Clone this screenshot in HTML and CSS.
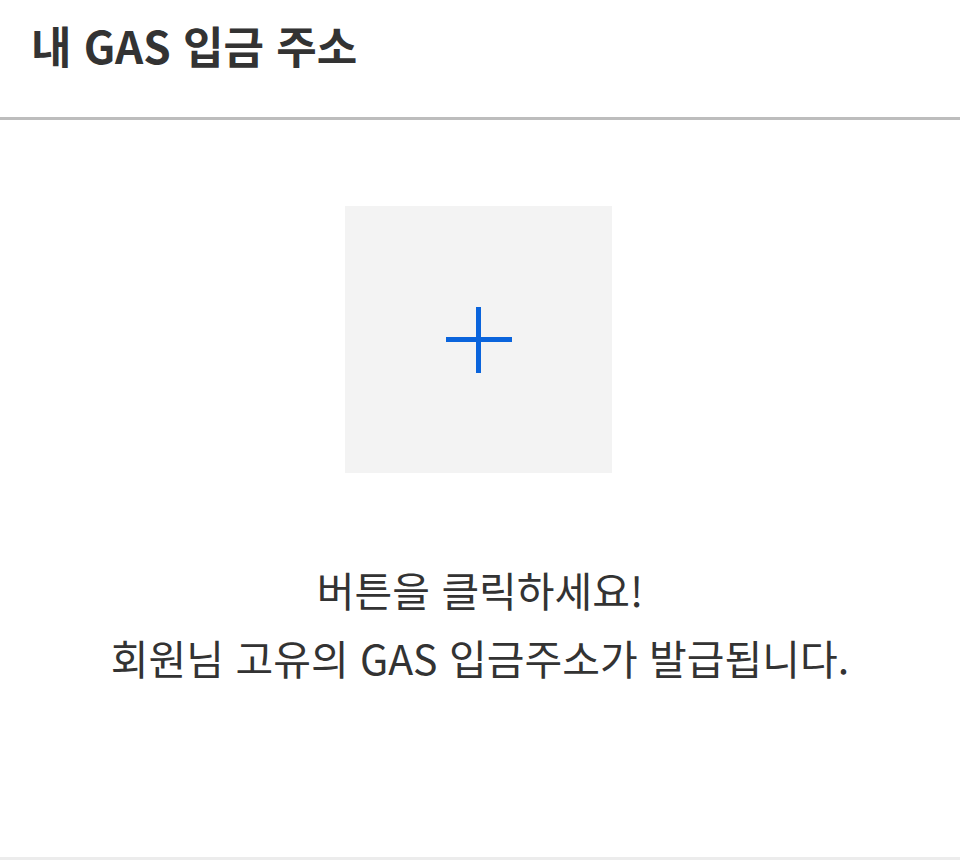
FILE: index.html
```html
<!DOCTYPE html>
<html lang="ko">
<head>
    <meta charset="UTF-8">
    <meta name="viewport" content="width=device-width, initial-scale=1.0">
    <title>내 GAS 입금 주소</title>
    <link rel="stylesheet" href="styles.css">
</head>
<body>

<div class="page">
    <header class="page-header">
        <h1>내 GAS 입금 주소</h1>
    </header>

    <main class="address-panel">
        <button class="add-button" type="button" aria-label="주소 발급">
            <svg width="66" height="66" viewBox="0 0 66 66">
                <path d="M0 32.5H66M32.5 0V66" stroke="#0a64dc" stroke-width="5" fill="none"/>
            </svg>
        </button>
        <p class="guide">
            버튼을 클릭하세요!<br>
            회원님 고유의 GAS 입금주소가 발급됩니다.
        </p>
    </main>
</div>

</body>
</html>
```

FILE: styles.css
```css
body {
    margin: 0;
    background: #fff;
    font-family: "Noto Sans CJK KR", "Noto Sans", sans-serif;
    color: #333;
}
.page {
    display: flex;
    flex-direction: column;
    min-height: 100vh;
}
.page-header {
    height: 117px;
    border-bottom: 3px solid #bdbdbd;
    padding: 0 31px;
    display: flex;
    align-items: flex-start;
}
.page-header h1 {
    margin: 15px 0 0;
    font-size: 44px;
    font-weight: 700;
    line-height: 60px;
}
.address-panel {
    height: 740px;
    border-bottom: 3px solid #ececec;
    display: flex;
    flex-direction: column;
    align-items: center;
    padding-top: 86px;
    box-sizing: border-box;
}
.add-button {
    width: 267px;
    height: 267px;
    margin-left: -3px;
    border: none;
    background: #f3f3f3;
    display: flex;
    justify-content: center;
    align-items: center;
    padding: 0;
    cursor: pointer;
}
.guide {
    margin: 82px 0 0;
    font-size: 41px;
    line-height: 68px;
    text-align: center;
    color: #333;
}
```
